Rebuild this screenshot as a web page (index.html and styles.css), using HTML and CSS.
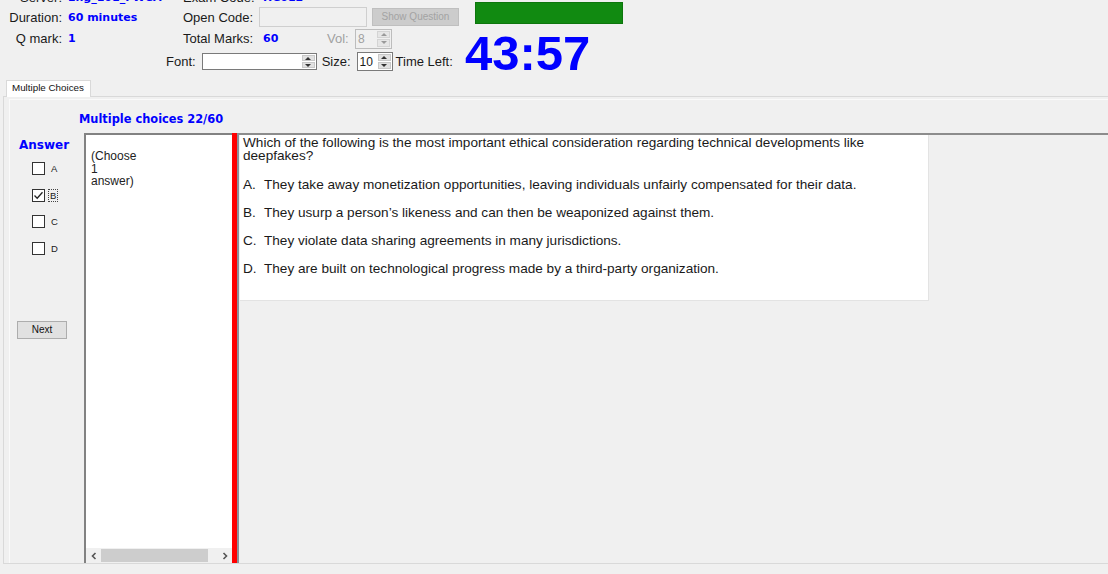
FILE: index.html
```html
<!DOCTYPE html>
<html>
<head>
<meta charset="utf-8">
<link rel="stylesheet" href="styles.css">
</head>
<body>
<div class="header">
  <div class="hdr-rows">
    <div class="row row1">
      <span class="lbl c1">Server:</span><span class="val c2">Eng_101_FWCA</span><span class="lbl c3">Exam Code:</span><span class="val v3">HC012</span>
    </div>
    <div class="row row2">
      <span class="lbl c1">Duration:</span><span class="val c2">60 minutes</span><span class="lbl c3">Open Code:</span>
      <span class="code-input"></span>
      <span class="btn-disabled">Show Question</span>
    </div>
    <div class="row row3">
      <span class="lbl c1">Q mark:</span><span class="val c2">1</span><span class="lbl c3">Total Marks:</span><span class="val v3 total">60</span>
      <span class="vol-lbl">Vol:</span>
      <span class="spinner vol"><span class="spin-text">8</span><span class="spin"><i class="up"></i><i class="dn"></i></span></span>
    </div>
    <div class="row row4">
      <span class="font-lbl">Font:</span>
      <span class="spinner font-box"><span class="spin-text"></span><span class="spin"><i class="up"></i><i class="dn"></i></span></span>
      <span class="size-lbl">Size:</span>
      <span class="spinner size-box"><span class="spin-text">10</span><span class="spin"><i class="up"></i><i class="dn"></i></span></span>
      <span class="time-lbl">Time Left:</span>
    </div>
  </div>
  <div class="hdr-right">
    <div class="green"></div>
    <div class="clock">43:57</div>
  </div>
</div>

<div class="tabs">
  <div class="tab">Multiple Choices</div>
</div>
<div class="panel">
  <div class="inner">
    <div class="title">Multiple choices 22/60</div>
    <div class="main">
      <div class="answer-col">
        <div class="answer-title">Answer</div>
        <div class="cb-row"><span class="cb"></span><span class="cb-lbl">A</span></div>
        <div class="cb-row"><span class="cb checked"><svg width="11" height="11" viewBox="0 0 11 11"><polyline points="1.5,5.5 4.2,8.3 9.5,2.2" fill="none" stroke="#222" stroke-width="1.3"/></svg></span><span class="cb-lbl focus">B</span></div>
        <div class="cb-row"><span class="cb"></span><span class="cb-lbl">C</span></div>
        <div class="cb-row"><span class="cb"></span><span class="cb-lbl">D</span></div>
        <div class="next-btn">Next</div>
      </div>
      <div class="textbox">
        <div class="tb-text">(Choose<br>1<br>answer)</div>
        <div class="hscroll">
          <span class="arrow">
            <svg width="8" height="8" viewBox="0 0 8 8"><polyline points="5.5,1 2.5,4 5.5,7" fill="none" stroke="#555" stroke-width="1.6"/></svg>
          </span>
          <span class="thumb"></span>
          <span class="track"></span>
          <span class="arrow">
            <svg width="8" height="8" viewBox="0 0 8 8"><polyline points="2.5,1 5.5,4 2.5,7" fill="none" stroke="#555" stroke-width="1.6"/></svg>
          </span>
        </div>
      </div>
      <div class="redbar"></div>
      <div class="q-area">
        <div class="q-box">
          <div class="q-text">Which of the following is the most important ethical consideration regarding technical developments like deepfakes?</div>
          <div class="opt"><span class="opt-l">A.</span>They take away monetization opportunities, leaving individuals unfairly compensated for their data.</div>
          <div class="opt"><span class="opt-l">B.</span>They usurp a person’s likeness and can then be weaponized against them.</div>
          <div class="opt"><span class="opt-l">C.</span>They violate data sharing agreements in many jurisdictions.</div>
          <div class="opt"><span class="opt-l">D.</span>They are built on technological progress made by a third-party organization.</div>
        </div>
      </div>
    </div>
  </div>
</div>
</body>
</html>
```

FILE: styles.css
```css
* { box-sizing: border-box; }

body {
  margin: 0;
  width: 1108px;
  height: 574px;
  overflow: hidden;
  background: #f0f0f0;
  font-family: "Liberation Sans", Arial, sans-serif;
  color: #1a1a1a;
}

/* ---------- header ---------- */
.header {
  display: flex;
  height: 78px;
}

.hdr-rows {
  width: 465px;
  display: flex;
  flex-direction: column;
}

.row {
  display: flex;
  align-items: center;
  font-size: 13px;
  white-space: nowrap;
}

.row1 { height: 14px; margin-top: -10px; }
.row2 { height: 24px; padding-top: 2px; }
.row3 { height: 21px; }
.row4 { height: 25px; padding-left: 166px; }

.lbl { text-align: right; }
.c1 { width: 62px; }
.c2 { width: 115px; margin-left: 6px; }
.c3 { width: 69px; }
.v3 { margin-left: 11px; }

.val {
  color: #0000ff;
  font-family: "DejaVu Sans", Verdana, sans-serif;
  font-weight: bold;
  font-size: 11px;
}

.total { width: 64px; }

.code-input {
  margin-left: 7px;
  width: 108px;
  height: 20px;
  background: #f0f0f0;
  border: 1px solid #cfcfcf;
}

.btn-disabled {
  margin-left: 5px;
  width: 87px;
  height: 18px;
  background: #cccccc;
  border: 1px solid #bfbfbf;
  color: #a3a3a3;
  font-size: 10px;
  line-height: 16px;
  text-align: center;
}

.vol-lbl {
  color: #a0a0a0;
  width: 19px;
}

.spinner {
  display: flex;
  align-items: stretch;
  background: #fff;
  border: 1px solid #7a7a7a;
}

.spin-text {
  flex: 1;
  font-size: 12px;
  padding-left: 2px;
  display: flex;
  align-items: center;
}

.spin {
  width: 15px;
  display: flex;
  flex-direction: column;
  padding: 1px;
  gap: 1px;
}

.spin i {
  flex: 1;
  background: #e1e1e1;
  border: 1px solid #c8c8c8;
  display: flex;
  align-items: center;
  justify-content: center;
}

.spin i::after {
  content: "";
  width: 0;
  height: 0;
  border-left: 3px solid transparent;
  border-right: 3px solid transparent;
}

.spin i.up::after { border-bottom: 3px solid #333; }
.spin i.dn::after { border-top: 3px solid #333; }

.vol {
  margin-left: 9px;
  width: 37px;
  height: 20px;
  background: #f0f0f0;
  border-color: #bdbdbd;
}

.vol .spin-text { color: #a0a0a0; }
.vol .spin i { background: #e6e6e6; border-color: #d4d4d4; }
.vol .spin i.up::after { border-bottom-color: #9a9a9a; }
.vol .spin i.dn::after { border-top-color: #9a9a9a; }

.font-box {
  margin-left: 6px;
  width: 115px;
  height: 17px;
}

.size-lbl { margin-left: 5px; }

.size-box {
  margin-left: 6px;
  width: 36px;
  height: 19px;
}

.time-lbl { margin-left: 3px; }

.hdr-right {
  display: flex;
  flex-direction: column;
  padding-top: 2px;
}

.green {
  margin-left: 10px;
  width: 148px;
  height: 25px;
  background: #118a11;
  border: 1px solid #0d760d;
}

.clock {
  margin-top: 5px;
  font-family: "Liberation Sans", Arial, sans-serif;
  font-weight: bold;
  font-size: 49px;
  line-height: 49px;
  color: #0000ff;
}

/* ---------- tabs ---------- */
.tabs {
  margin-top: 2px;
  padding-left: 6px;
  display: flex;
}

.tab {
  position: relative;
  z-index: 1;
  width: 85px;
  height: 17px;
  margin-bottom: -1px;
  background: #fff;
  border: 1px solid #d9d9d9;
  border-bottom: none;
  font-size: 9.8px;
  line-height: 14px;
  padding-left: 5px;
  color: #111;
}

.panel {
  margin-left: 3px;
  height: 468px;
  border-top: 1px solid #d9d9d9;
  border-left: 1px solid #d9d9d9;
  border-bottom: 1px solid #d9d9d9;
  padding: 2px 0 0 5px;
}

.inner {
  height: 464px;
  border-top: 1px solid #fafafa;
  border-left: 1px solid #fafafa;
}

.title {
  padding: 11px 0 0 69px;
  height: 26px;
  line-height: 16px;
  color: #0000ff;
  font-family: "DejaVu Sans", Verdana, sans-serif;
  font-weight: bold;
  font-size: 11.4px;
}

.main {
  margin-top: 7px;
  height: 430px;
  display: flex;
}

/* ---------- answer column ---------- */
.answer-col {
  width: 74px;
  display: flex;
  flex-direction: column;
}

.answer-title {
  padding: 4px 0 0 9px;
  height: 22.5px;
  line-height: 16px;
  color: #0000ff;
  font-family: "DejaVu Sans", Verdana, sans-serif;
  font-weight: bold;
  font-size: 12px;
}

.cb-row {
  height: 26.5px;
  display: flex;
  align-items: center;
  padding-left: 22px;
}

.cb {
  width: 13px;
  height: 13px;
  background: #fff;
  border: 1px solid #333;
  display: flex;
  align-items: center;
  justify-content: center;
}

.cb-lbl {
  margin-left: 4px;
  font-size: 9.5px;
  line-height: 11px;
  padding: 0 1px;
  border: 1px solid transparent;
}

.cb-lbl.focus {
  border: 1px dotted #444;
  margin-left: 3px;
}

.next-btn {
  margin: 59px 0 0 7px;
  width: 50px;
  height: 18px;
  background: #e1e1e1;
  border: 1px solid #adadad;
  font-size: 10px;
  line-height: 16px;
  text-align: center;
  color: #111;
}

/* ---------- text box ---------- */
.textbox {
  width: 148px;
  background: #fff;
  border-left: 2px solid #828282;
  border-top: 2px solid #828282;
  display: flex;
  flex-direction: column;
}

.tb-text {
  flex: 1;
  padding: 15px 0 0 5px;
  font-size: 12px;
  line-height: 12.5px;
  color: #222;
}

.hscroll {
  height: 15px;
  display: flex;
  align-items: stretch;
  background: #f0f0f0;
}

.hscroll .arrow {
  width: 15px;
  display: flex;
  align-items: center;
  justify-content: center;
}

.thumb {
  width: 107px;
  background: #cdcdcd;
  margin: 1px 0;
}

.track { flex: 1; }

.redbar {
  width: 5px;
  background: #ff0000;
}

/* ---------- question area ---------- */
.q-area {
  flex: 1;
  border-left: 2px solid #8a9099;
  border-top: 2px solid #8c8c8c;
  padding-left: 1px;
}

.q-box {
  width: 689px;
  height: 166px;
  background: #fff;
  border-right: 1px solid #e3e3e3;
  border-bottom: 1px solid #e3e3e3;
  padding: 1px 0 0 3px;
  font-size: 13.6px;
  line-height: 13px;
  color: #1a1a1a;
}

.q-text {
  width: 660px;
}

.opt {
  margin-top: 16px;
}

.opt + .opt {
  margin-top: 15px;
}

.opt-l {
  display: inline-block;
  width: 21px;
}
```
